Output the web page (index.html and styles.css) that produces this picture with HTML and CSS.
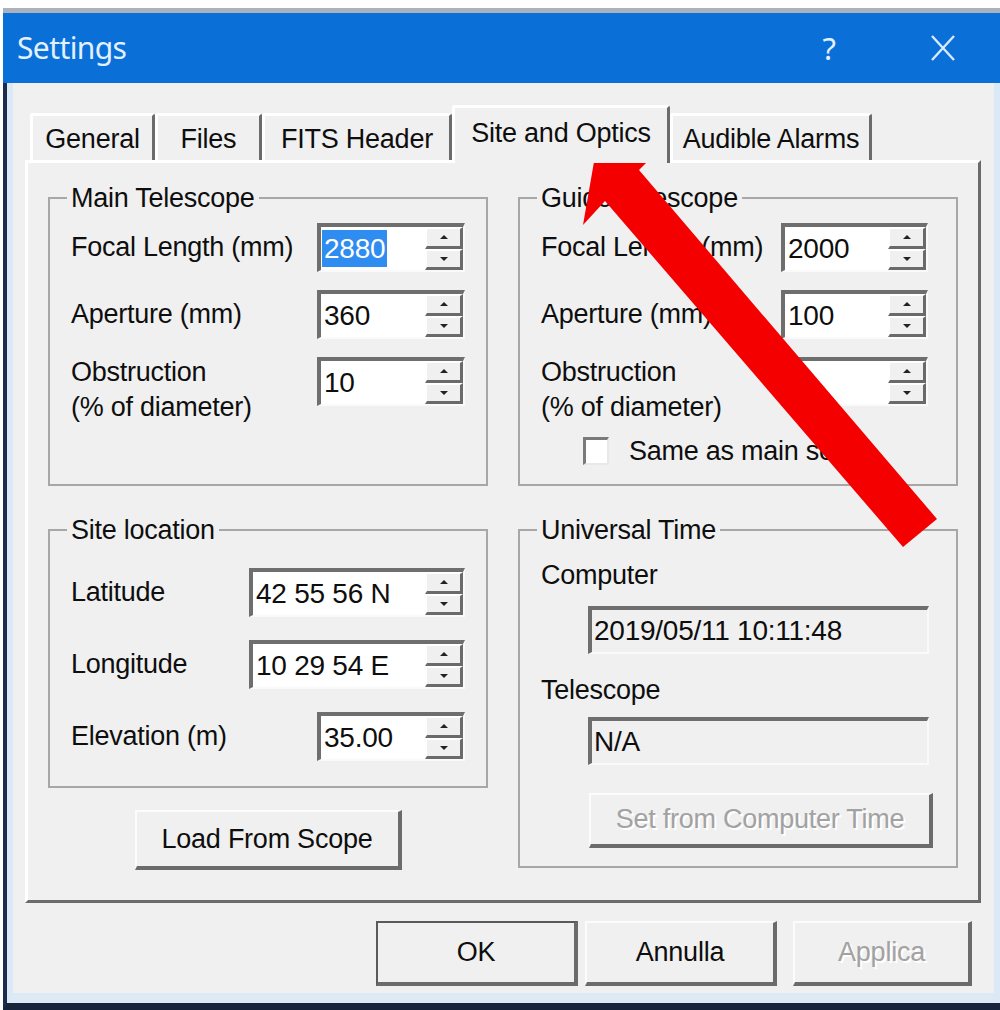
FILE: index.html
```html
<!DOCTYPE html>
<html lang="en">
<head>
<meta charset="utf-8">
<title>Settings</title>
<link rel="stylesheet" href="styles.css">
</head>
<body>
<div class="screen">
  <div class="window">
    <header class="titlebar">
      <span class="title">Settings</span>
      <span class="tb-help">?</span>
      <span class="tb-close">
        <svg viewBox="0 0 26 28" width="26" height="28"><path d="M2 2 L24 26 M24 2 L2 26"/></svg>
      </span>
    </header>

    <div class="client">
      <div class="client-inner">
        <nav class="tabs">
          <div class="tab tab-general">General</div>
          <div class="tab tab-files">Files</div>
          <div class="tab tab-fits">FITS Header</div>
          <div class="tab tab-site is-active">Site and Optics</div>
          <div class="tab tab-alarms">Audible Alarms</div>
        </nav>

        <section class="panel">
          <div class="col">
            <fieldset class="group group-optics">
              <legend>Main Telescope</legend>
              <div class="rows">
                <div class="row">
                  <span class="lbl">Focal Length (mm)</span>
                  <div class="spin"><span class="val"><span class="sel">2880</span></span><span class="spin-btns"><span class="sb up"></span><span class="sb down"></span></span></div>
                </div>
                <div class="row">
                  <span class="lbl">Aperture (mm)</span>
                  <div class="spin"><span class="val">360</span><span class="spin-btns"><span class="sb up"></span><span class="sb down"></span></span></div>
                </div>
                <div class="row row-top">
                  <span class="lbl">Obstruction<br>(% of diameter)</span>
                  <div class="spin"><span class="val">10</span><span class="spin-btns"><span class="sb up"></span><span class="sb down"></span></span></div>
                </div>
              </div>
            </fieldset>

            <fieldset class="group group-site">
              <legend>Site location</legend>
              <div class="rows rows-site">
                <div class="row">
                  <span class="lbl">Latitude</span>
                  <div class="spin spin-wide"><span class="val">42 55 56 N</span><span class="spin-btns"><span class="sb up"></span><span class="sb down"></span></span></div>
                </div>
                <div class="row">
                  <span class="lbl">Longitude</span>
                  <div class="spin spin-wide"><span class="val">10 29 54 E</span><span class="spin-btns"><span class="sb up"></span><span class="sb down"></span></span></div>
                </div>
                <div class="row">
                  <span class="lbl">Elevation (m)</span>
                  <div class="spin"><span class="val">35.00</span><span class="spin-btns"><span class="sb up"></span><span class="sb down"></span></span></div>
                </div>
              </div>
            </fieldset>

            <button class="btn btn-load" type="button">Load From Scope</button>
          </div>

          <div class="col">
            <fieldset class="group group-optics group-guide">
              <legend>Guide Telescope</legend>
              <div class="rows">
                <div class="row">
                  <span class="lbl">Focal Length (mm)</span>
                  <div class="spin"><span class="val">2000</span><span class="spin-btns"><span class="sb up"></span><span class="sb down"></span></span></div>
                </div>
                <div class="row">
                  <span class="lbl">Aperture (mm)</span>
                  <div class="spin"><span class="val">100</span><span class="spin-btns"><span class="sb up"></span><span class="sb down"></span></span></div>
                </div>
                <div class="row row-top">
                  <span class="lbl">Obstruction<br>(% of diameter)</span>
                  <div class="spin"><span class="val"></span><span class="spin-btns"><span class="sb up"></span><span class="sb down"></span></span></div>
                </div>
              </div>
              <div class="check-row">
                <span class="check"></span>
                <span class="check-text">Same as main scope</span>
              </div>
            </fieldset>

            <fieldset class="group group-time">
              <legend>Universal Time</legend>
              <div class="ut-label ut-first">Computer</div>
              <div class="field">2019/05/11 10:11:48</div>
              <div class="ut-label ut-second">Telescope</div>
              <div class="field field-second">N/A</div>
              <button class="btn btn-settime is-disabled" type="button">Set from Computer Time</button>
            </fieldset>
          </div>
        </section>

        <footer class="footer">
          <button class="btn btn-default btn-ok" type="button">OK</button>
          <button class="btn btn-cancel" type="button">Annulla</button>
          <button class="btn btn-apply is-disabled" type="button">Applica</button>
        </footer>
      </div>
    </div>
  </div>

  <svg class="pointer" viewBox="0 0 1000 1010" width="1000" height="1010">
    <polygon points="595,156 662,147 639,170 937,519 903,547 605,201 583,225"/>
  </svg>
</div>
</body>
</html>
```

FILE: styles.css
```css
html, body {
  margin: 0;
  background: #ffffff;
}

body {
  font-family: "Liberation Sans", Arial, sans-serif;
  color: #0e0e0e;
  letter-spacing: -0.25px;
}

.screen {
  position: relative;
  width: 1000px;
  height: 1010px;
  padding-top: 8px;
  box-sizing: border-box;
  overflow: hidden;
}

.window {
  margin-left: 3px;
  width: 997px;
}

/* ---- title bar ---- */
.titlebar {
  height: 75px;
  box-sizing: border-box;
  border-top: 5px solid #aab3bd;
  background: #0b6fd8;
  display: flex;
  align-items: center;
  padding: 0 44px 0 14px;
  color: #e2f1ff;
  letter-spacing: normal;
}

.title {
  font-family: "Noto Sans", "Open Sans", sans-serif;
  font-size: 30px;
  line-height: 30px;
  letter-spacing: -0.6px;
}

.tb-help {
  margin-left: auto;
  margin-right: 94px;
  font-family: "Noto Sans", "Open Sans", sans-serif;
  font-size: 31px;
  line-height: 30px;
}

.tb-close {
  display: flex;
}

.tb-close path {
  stroke: #d6ebff;
  stroke-width: 2.4;
  fill: none;
}

/* ---- client area ---- */
.client {
  border-left: 4px solid #1c2c4a;
  border-bottom: 7px solid #17243b;
}

.client-inner {
  background: #f0f0f0;
  border-left: 6px solid #dbe9f6;
  border-right: 6px solid #dbe9f6;
  border-bottom: 10px solid #dde9f5;
  padding-top: 22px;
}

/* ---- tabs ---- */
.tabs {
  display: flex;
  align-items: flex-end;
  height: 55px;
  margin-left: 17px;
}

.tab {
  height: 47px;
  box-sizing: border-box;
  border-top: 3px solid #ffffff;
  border-left: 3px solid #ffffff;
  border-right: 3px solid #6b6b6b;
  border-top-left-radius: 3px;
  border-top-right-radius: 3px;
  padding-top: 3px;
  display: flex;
  align-items: center;
  justify-content: center;
  font-size: 27px;
  background: #f0f0f0;
}

.tab-general { width: 125px; }
.tab-files { width: 107px; }
.tab-fits { width: 190px; }
.tab-site { width: 218px; }
.tab-alarms { width: 202px; }

.tab.is-active {
  position: relative;
  z-index: 1;
  height: 58px;
  margin-bottom: -3px;
  padding-top: 0;
  padding-bottom: 4px;
}

/* ---- property page ---- */
.panel {
  height: 743px;
  box-sizing: border-box;
  margin: 0 13px 0 12px;
  border-top: 3px solid #ffffff;
  border-left: 3px solid #ffffff;
  border-right: 3px solid #6b6b6b;
  border-bottom: 3px solid #6b6b6b;
  padding: 20px 20px 0;
  display: flex;
  gap: 30px;
}

.col {
  width: 440px;
  display: flex;
  flex-direction: column;
}

.group {
  margin: 0;
  padding: 0 21px;
  border: 2px solid #a7a7a7;
  box-sizing: border-box;
  min-width: 0;
}

.group legend {
  padding: 0 4px;
  margin-left: -4px;
  font-size: 27px;
  line-height: 30px;
}

.group-optics { height: 303px; }
.group-site { height: 273px; margin-top: 29px; }
.group-time { height: 353px; margin-top: 29px; }

.rows {
  display: flex;
  flex-direction: column;
  gap: 18px;
  padding-top: 10px;
}

.rows-site {
  gap: 23px;
  padding-top: 23px;
}

.row {
  display: flex;
  align-items: center;
  justify-content: space-between;
  height: 49px;
}

.row-top {
  align-items: flex-start;
}

.lbl {
  font-size: 27px;
  line-height: 35px;
  white-space: nowrap;
}

.row-top .lbl {
  margin-top: -2px;
}

/* ---- spin edit ---- */
.spin {
  width: 148px;
  height: 49px;
  box-sizing: border-box;
  display: flex;
  background: #ffffff;
  border-top: 4px solid #6e6e6e;
  border-left: 4px solid #6e6e6e;
  border-right: 2px solid #fafafa;
  border-bottom: 2px solid #fafafa;
}

.spin-wide { width: 216px; }

.group-guide .spin {
  width: 147px;
  margin-right: 7px;
}

.val {
  flex: 1;
  display: flex;
  align-items: center;
  padding-left: 3px;
  font-size: 28px;
  white-space: nowrap;
  overflow: hidden;
}

.sel {
  background: #2f8cf0;
  color: #ffffff;
  line-height: 37px;
  padding: 0 2px;
  margin-left: -2px;
}

.spin-btns {
  width: 38px;
  display: flex;
  flex-direction: column;
}

.sb {
  flex: 1;
  position: relative;
  box-sizing: border-box;
  background: #f0f0f0;
  border-top: 2px solid #ffffff;
  border-left: 2px solid #ffffff;
  border-right: 3px solid #6a6a6a;
  border-bottom: 3px solid #6a6a6a;
}

.sb::after {
  content: "";
  position: absolute;
  left: 50%;
  top: 50%;
  transform: translate(-50%, -50%);
  border-left: 4px solid transparent;
  border-right: 4px solid transparent;
}

.sb.up::after { border-bottom: 4px solid #222222; }
.sb.down::after { border-top: 4px solid #222222; }

/* ---- checkbox ---- */
.check-row {
  display: flex;
  align-items: center;
  height: 28px;
  margin-top: 31px;
  padding-left: 42px;
}

.check {
  width: 26px;
  height: 28px;
  box-sizing: border-box;
  background: #ffffff;
  border-top: 3px solid #7a7a7a;
  border-left: 3px solid #7a7a7a;
  border-right: 2px solid #e8e8e8;
  border-bottom: 2px solid #e8e8e8;
}

.check-text {
  margin-left: 20px;
  font-size: 27px;
  white-space: nowrap;
}

/* ---- universal time ---- */
.ut-label {
  font-size: 27px;
  line-height: 34px;
}

.ut-first { margin-top: 13px; }
.ut-second { margin-top: 19px; }

.field {
  margin: 14px 0 0 47px;
  width: 341px;
  height: 48px;
  box-sizing: border-box;
  background: #f0f0f0;
  border-top: 4px solid #6e6e6e;
  border-left: 4px solid #6e6e6e;
  border-right: 2px solid #fafafa;
  border-bottom: 2px solid #fafafa;
  padding-left: 2px;
  font-size: 28px;
  line-height: 42px;
  white-space: nowrap;
}

.field-second { margin-top: 10px; }

/* ---- push buttons ---- */
.btn {
  box-sizing: border-box;
  padding: 0;
  margin: 0;
  background: #f0f0f0;
  border-top: 2px solid #fcfcfc;
  border-left: 2px solid #fcfcfc;
  border-right: 4px solid #6b6b6b;
  border-bottom: 4px solid #6b6b6b;
  font-family: "Liberation Sans", Arial, sans-serif;
  font-size: 27px;
  letter-spacing: -0.25px;
  color: #0e0e0e;
  display: flex;
  align-items: center;
  justify-content: center;
}

.btn.is-disabled {
  color: #a2a2a2;
  text-shadow: 2px 2px 0 #ffffff;
}

.btn-default {
  border-top-color: #5a5a5a;
  border-left-color: #5a5a5a;
}

.btn-load {
  width: 267px;
  height: 60px;
  margin: 22px auto 0;
}

.btn-settime {
  width: 344px;
  height: 55px;
  margin: 28px 0 0 48px;
}

.footer {
  display: flex;
  justify-content: flex-end;
  margin-top: 18px;
  padding: 0 22px 7px 0;
}

.footer .btn { height: 65px; }
.btn-ok { width: 202px; }
.btn-cancel { width: 192px; margin-left: 7px; }
.btn-apply { width: 179px; margin-left: 16px; }

/* ---- annotation arrow drawn over the dialog ---- */
.pointer {
  position: absolute;
  top: 0;
  left: 0;
  pointer-events: none;
}

.pointer polygon {
  fill: #f40000;
}
```
